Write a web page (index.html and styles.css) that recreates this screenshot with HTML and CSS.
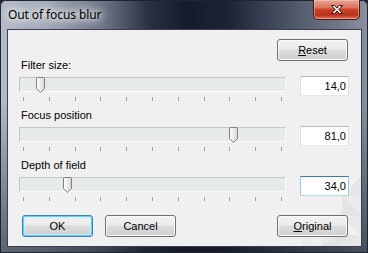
FILE: index.html
```html
<!DOCTYPE html>
<html>
<head>
<meta charset="utf-8">
<link rel="stylesheet" href="styles.css">
</head>
<body>
<div class="window">
  <div class="titlebar">
    <span class="title">Out of focus blur</span>
    <div class="close">
      <svg width="14" height="11" viewBox="0 0 14 11"><path d="M1.5 1.5h3.2L7 4.2 9.3 1.5h3.2L8.8 5.5l3.7 4h-3.2L7 6.8 4.7 9.5H1.5l3.7-4z" fill="#fff" stroke="#3a1208" stroke-width="1" stroke-linejoin="round"/></svg>
    </div>
  </div>
  <div class="client">
    <svg class="decor" width="60" height="70" viewBox="0 0 60 70">
      <polygon points="60,0 60,20 42,20" fill="#e6e6e6"/>
      <polygon points="60,20 42,20 60,40" fill="#ebebeb"/>
      <polygon points="42,20 60,40 40,40" fill="#e4e4e4"/>
      <polygon points="60,40 40,40 60,60" fill="#e9e9e9"/>
      <polygon points="40,40 22,40 40,58" fill="#ececec"/>
      <polygon points="40,58 60,60 40,70" fill="#e5e5e5"/>
      <polygon points="22,40 40,58 20,70" fill="#e9e9e9"/>
      <polygon points="20,70 40,58 40,70" fill="#e2e2e2"/>
      <polygon points="60,60 60,70 40,70" fill="#e8e8e8"/>
      <polygon points="2,58 20,70 0,70" fill="#ececec"/>
    </svg>
    <div class="toprow">
      <button class="btn"><u>R</u>eset</button>
    </div>
    <section class="param first">
      <div class="label">Filter size:</div>
      <div class="controls">
        <div class="slider">
          <div class="track"><span class="thumb" style="left:16px"><svg width="9" height="16" viewBox="0 0 9 16"><defs><linearGradient id="tg" x1="0" x2="1" y1="0" y2="0"><stop offset="0" stop-color="#ffffff"/><stop offset="1" stop-color="#d6d6d6"/></linearGradient></defs><path d="M1.5 .5h6a1 1 0 0 1 1 1v10l-4 4-4-4v-10a1 1 0 0 1 1-1z" fill="url(#tg)" stroke="#7e7e7e"/></svg></span></div>
          <div class="ticks"><i></i><i></i><i></i><i></i><i></i><i></i><i></i><i></i><i></i><i></i><i></i></div>
        </div>
        <input class="num" type="text" value="14,0">
      </div>
    </section>
    <section class="param">
      <div class="label">Focus position</div>
      <div class="controls">
        <div class="slider">
          <div class="track"><span class="thumb" style="left:209px"><svg width="9" height="16" viewBox="0 0 9 16"><path d="M1.5 .5h6a1 1 0 0 1 1 1v10l-4 4-4-4v-10a1 1 0 0 1 1-1z" fill="url(#tg)" stroke="#7e7e7e"/></svg></span></div>
          <div class="ticks"><i></i><i></i><i></i><i></i><i></i><i></i><i></i><i></i><i></i><i></i><i></i></div>
        </div>
        <input class="num" type="text" value="81,0">
      </div>
    </section>
    <section class="param">
      <div class="label">Depth of field</div>
      <div class="controls">
        <div class="slider">
          <div class="track"><span class="thumb" style="left:43px"><svg width="9" height="16" viewBox="0 0 9 16"><path d="M1.5 .5h6a1 1 0 0 1 1 1v10l-4 4-4-4v-10a1 1 0 0 1 1-1z" fill="url(#tg)" stroke="#7e7e7e"/></svg></span></div>
          <div class="ticks"><i></i><i></i><i></i><i></i><i></i><i></i><i></i><i></i><i></i><i></i><i></i></div>
        </div>
        <input class="num focused" type="text" value="34,0">
      </div>
    </section>
    <div class="buttons">
      <button class="btn default">OK</button>
      <button class="btn">Cancel</button>
      <button class="btn right"><u>O</u>riginal</button>
    </div>
  </div>
</div>
</body>
</html>
```

FILE: styles.css
```css
* { box-sizing: border-box; }
html, body { margin: 0; padding: 0; background: #1c2131; }
body { width: 368px; height: 253px; overflow: hidden; }

.window {
  width: 368px;
  height: 253px;
  display: flex;
  flex-direction: column;
  border-radius: 6px 6px 0 0;
  background:
    linear-gradient(to bottom, rgba(20,24,38,0) 0%, rgba(20,24,38,0) 40%, rgba(20,24,38,0.55) 100%),
    linear-gradient(to right, #b4bbc7 0%, #a3abb9 12%, #6d7586 28%, #2b3246 40%, #161b2c 50%, #1d2335 62%, #4a5265 78%, #6f7789 92%, #8a92a1 100%);
  box-shadow: inset 0 0 0 1px #20242e;
}

.titlebar {
  height: 29px;
  display: flex;
  align-items: flex-start;
  justify-content: space-between;
  padding-left: 8px;
}
.title {
  margin-top: 6px;
  font: 12px "Noto Sans", "Open Sans", sans-serif;
  color: #000;
  text-shadow: 0 0 6px #fff, 0 0 10px #fff, 0 0 14px rgba(255,255,255,0.9);
  letter-spacing: -0.1px;
}
.close {
  width: 47px;
  height: 20px;
  margin-right: 8px;
  border: 1px solid #4b1a12;
  border-top: none;
  border-radius: 0 0 5px 5px;
  background: linear-gradient(to bottom, #e6a797 0%, #d9735d 40%, #c9402a 50%, #b8321c 80%, #e2765a 100%);
  box-shadow: inset 0 0 0 1px rgba(255,210,200,0.45);
  display: flex;
  align-items: center;
  justify-content: center;
}

.client {
  position: relative;
  flex: 1;
  margin: 0 6px 6px 7px;
  border: 1px solid #3a4050;
  background: #f0f0f0;
  padding: 9px 12px 8px 11px;
  display: flex;
  flex-direction: column;
  font: 11px "Liberation Sans", Arial, sans-serif;
  color: #000;
}
.decor {
  position: absolute;
  right: 0;
  bottom: 0;
  z-index: 0;
}
.toprow, .param, .buttons { position: relative; z-index: 1; }

.toprow {
  display: flex;
  justify-content: flex-end;
  padding-right: 1px;
}

.param { display: flex; flex-direction: column; margin-bottom: 8px; }
.param.first { margin-top: -2px; }
.label {
  height: 13px;
  line-height: 13px;
  padding-left: 2px;
  margin-bottom: 4px;
}
.controls {
  display: flex;
  align-items: flex-start;
  gap: 14px;
}
.slider { flex: 1; padding-top: 1px; }
.track {
  position: relative;
  height: 15px;
  background: #e7eaea;
  border: 1px solid;
  border-color: #c3c7c7 #f6f7f7 #fbfbfb #c3c7c7;
}
.thumb {
  position: absolute;
  top: -1px;
  width: 9px;
  height: 16px;
  display: block;
}
.thumb svg { display: block; }
.ticks {
  display: flex;
  justify-content: space-between;
  padding: 0 4px;
  margin-top: 5px;
  height: 4px;
}
.ticks i { display: block; width: 1px; height: 4px; background: #a3a3a3; }

.num {
  width: 49px;
  height: 20px;
  border: 1px solid;
  border-color: #b5b8bd #dfe2e8 #e6e8ec #dfe2e8;
  background: #fff;
  font: 11px "Liberation Sans", Arial, sans-serif;
  color: #000;
  text-align: right;
  padding: 0 2px 0 2px;
  margin: 0;
  outline: none;
}
.num.focused { border-color: #3d7bad #a4c9e3 #b7d9ed #a4c9e3; }

.buttons {
  margin-top: 6px;
  display: flex;
  padding-left: 3px;
  padding-right: 1px;
  gap: 12px;
}
.btn {
  width: 71px;
  height: 22px;
  padding: 0;
  border: 1px solid #707070;
  border-radius: 3px;
  background: linear-gradient(to bottom, #f2f2f2 0%, #ebebeb 45%, #dddddd 50%, #cfcfcf 100%);
  box-shadow: inset 0 0 0 1px #fbfbfb;
  font: 11px "Liberation Sans", Arial, sans-serif;
  color: #000;
}
.btn.default {
  border-color: #3c7fb1;
  box-shadow: inset 0 0 0 1px #5fd3f7, inset 0 0 0 2px rgba(200,240,255,0.6);
}
.btn.right { margin-left: auto; }
```
